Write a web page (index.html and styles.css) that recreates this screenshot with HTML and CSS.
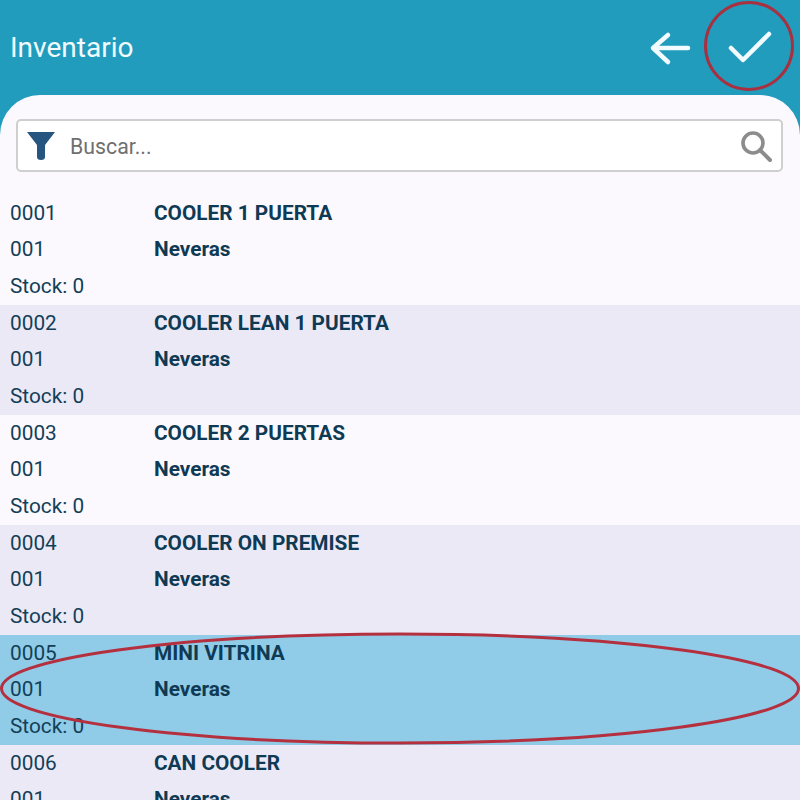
FILE: index.html
```html
<!DOCTYPE html>
<html>
<head>
    <title>Inventario</title>
    <link rel="stylesheet" href="styles.css">
</head>
<body>

    <div class="screen">
        <div class="header">
            <h1>Inventario</h1>
            <div class="header-actions">
                <svg class="back-icon" width="44" height="44" viewBox="0 0 44 44">
                    <path d="M39 17H4M19 4 4 17 19 31" transform="translate(0 5)" fill="none" stroke="#f2fbff" stroke-width="4.5" stroke-linecap="round" stroke-linejoin="round"/>
                </svg>
                <svg class="check-icon" width="44" height="36" viewBox="0 0 44 36">
                    <path d="M3 18 15 30 41 4" fill="none" stroke="#f2fbff" stroke-width="4.5" stroke-linecap="round" stroke-linejoin="round"/>
                </svg>
            </div>
        </div>

        <div class="content">
            <div class="search-box">
                <svg class="filter-icon" width="30" height="30" viewBox="0 0 30 30">
                    <path d="M1 1H29L19 14V26Q19 29 15 29 11 29 11 26V14Z" fill="#265580"/>
                </svg>
                <span class="search-text">Buscar...</span>
                <svg class="search-icon" width="32" height="32" viewBox="0 0 32 32">
                    <circle cx="13" cy="13" r="10" fill="none" stroke="#8c8c8c" stroke-width="3.6"/>
                    <path d="M20 20 30 30" stroke="#8c8c8c" stroke-width="4" stroke-linecap="round"/>
                </svg>
            </div>

            <div class="list">
                <div class="row">
                    <span>0001</span><strong>COOLER 1 PUERTA</strong>
                    <span>001</span><strong>Neveras</strong>
                    <span>Stock: 0</span>
                </div>
                <div class="row alt">
                    <span>0002</span><strong>COOLER LEAN 1 PUERTA</strong>
                    <span>001</span><strong>Neveras</strong>
                    <span>Stock: 0</span>
                </div>
                <div class="row">
                    <span>0003</span><strong>COOLER 2 PUERTAS</strong>
                    <span>001</span><strong>Neveras</strong>
                    <span>Stock: 0</span>
                </div>
                <div class="row alt">
                    <span>0004</span><strong>COOLER ON PREMISE</strong>
                    <span>001</span><strong>Neveras</strong>
                    <span>Stock: 0</span>
                </div>
                <div class="row selected">
                    <span>0005</span><strong>MINI VITRINA</strong>
                    <span>001</span><strong>Neveras</strong>
                    <span>Stock: 0</span>
                </div>
                <div class="row alt">
                    <span>0006</span><strong>CAN COOLER</strong>
                    <span>001</span><strong>Neveras</strong>
                    <span>Stock: 0</span>
                </div>
            </div>
        </div>

        <!-- hand drawn marks on top of the screenshot -->
        <div class="mark-circle"></div>
        <svg class="mark-ellipse" width="800" height="116" viewBox="0 0 800 116">
            <ellipse cx="400" cy="57.5" rx="398.5" ry="54.5" fill="none" stroke="#b5303f" stroke-width="3"/>
        </svg>
    </div>

</body>
</html>
```

FILE: styles.css
```css
html, body {
    margin: 0;
    padding: 0;
}

body {
    font-family: 'Roboto', sans-serif;
    background-color: #219cbd;
}

.screen {
    position: relative;
    width: 800px;
    height: 800px;
    overflow: hidden;
}

.header {
    height: 95px;
    padding: 0 10px;
    box-sizing: border-box;
    display: flex;
    justify-content: space-between;
    align-items: center;
    background-color: #219cbd;
}

.header h1 {
    margin: 0;
    color: #f2fbff;
    font-size: 28px;
    font-weight: 400;
}

.header-actions {
    display: flex;
    align-items: center;
    gap: 35px;
    padding-right: 18px;
}

.content {
    height: 705px;
    background-color: #fbf8fe;
    border-radius: 40px 40px 0 0;
    padding-top: 24px;
    box-sizing: border-box;
}

.search-box {
    height: 53px;
    margin: 0 17px 0 16px;
    padding: 0 8px;
    display: flex;
    align-items: center;
    box-sizing: border-box;
    background-color: #fff;
    border: 2px solid #cfcfd2;
    border-radius: 5px;
}

.search-text {
    margin-left: 14px;
    margin-top: 2px;
    flex: 1;
    color: #6f6f6f;
    font-size: 21.3px;
}

.search-icon {
    margin-right: 1px;
}

.list {
    margin-top: 23px;
}

.row {
    height: 110px;
    padding: 0 10px;
    box-sizing: border-box;
    display: grid;
    grid-template-columns: 144px 1fr;
    grid-template-rows: 36px 36px 37px;
    align-items: center;
    color: #123f57;
    font-size: 20.8px;
}

.row strong {
    color: #0f3a54;
    font-weight: 700;
}

.alt {
    background-color: #ece9f7;
}

.selected {
    background-color: #90cbe8;
}

.mark-circle {
    position: absolute;
    left: 704px;
    top: 1px;
    width: 90px;
    height: 90px;
    box-sizing: border-box;
    border: 3px solid #a8303f;
    border-radius: 50%;
}

.mark-ellipse {
    position: absolute;
    left: 0;
    top: 631px;
}
```
